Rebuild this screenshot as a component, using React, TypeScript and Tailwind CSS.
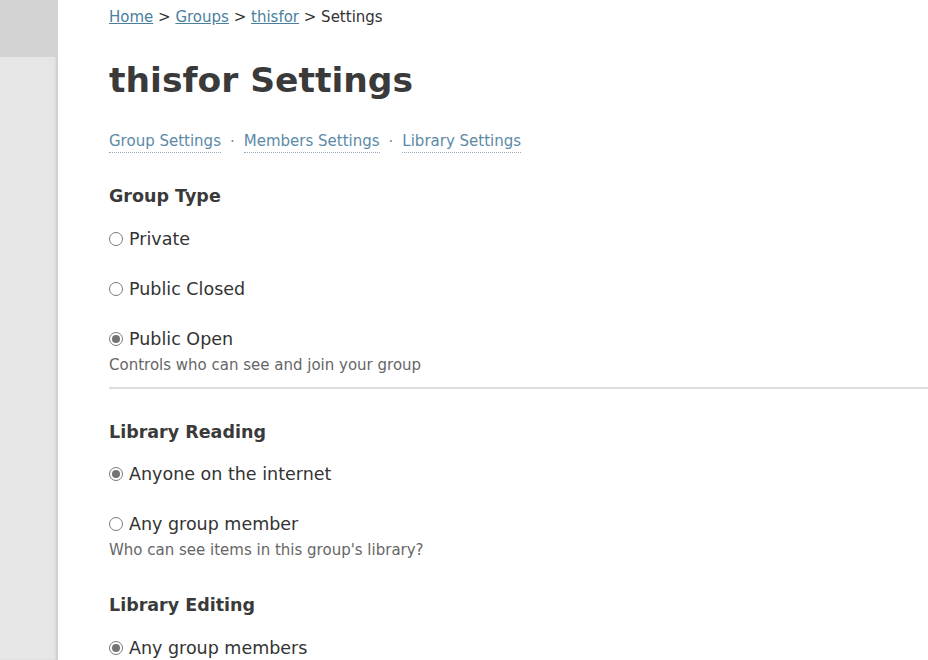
import React from "react";

function Radio({ checked, label }: { checked?: boolean; label: string }) {
  return (
    <label className="flex items-center gap-[6px] text-[17.5px] text-[#333] leading-[24px]">
      <span className="w-[14px] h-[14px] rounded-full border border-[#7a7a7a] bg-white flex items-center justify-center shrink-0">
        {checked && <span className="w-[8px] h-[8px] rounded-full bg-[#737373]" />}
      </span>
      <span>{label}</span>
    </label>
  );
}

export default function App() {
  return (
    <div className="flex min-h-[660px] bg-white" style={{ fontFamily: '"DejaVu Sans", Verdana, sans-serif' }}>
      <div className="w-[58px] shrink-0 flex flex-col bg-[#e6e6e6] shadow-[inset_-3px_0_3px_-1px_rgba(0,0,0,0.12)]">
        <div className="h-[57px] bg-[#d3d3d3]" />
      </div>
      <div className="flex-1 pl-[51px] overflow-hidden">
        <div className="pt-[6px] text-[15px] leading-[22px] text-[#333]">
          <a className="text-[#4a7f9f] underline">Home</a> &gt; <a className="text-[#4a7f9f] underline">Groups</a> &gt;{" "}
          <a className="text-[#4a7f9f] underline">thisfor</a> &gt; Settings
        </div>
        <h1 className="mt-[32px] text-[34.5px] leading-[40px] font-bold text-[#3a3a3a]">thisfor Settings</h1>
        <div className="mt-[30px] flex items-center text-[15px] leading-[22px] text-[#5b8aa7]">
          <a className="border-b border-dotted border-[#9ab]">Group Settings</a>
          <span className="mx-[9px] text-[#888]">·</span>
          <a className="border-b border-dotted border-[#9ab]">Members Settings</a>
          <span className="mx-[9px] text-[#888]">·</span>
          <a className="border-b border-dotted border-[#9ab]">Library Settings</a>
        </div>
        <h2 className="mt-[31px] text-[17.5px] leading-[24px] font-bold text-[#3a3a3a]">Group Type</h2>
        <div className="mt-[19px] flex flex-col gap-[26px]">
          <Radio label="Private" />
          <Radio label="Public Closed" />
          <Radio checked label="Public Open" />
        </div>
        <p className="mt-[4px] text-[15px] leading-[20px] text-[#666]">Controls who can see and join your group</p>
        <div className="mt-[12px] border-t-2 border-[#dcdcdc] -mr-[10px]" />
        <h2 className="mt-[31px] text-[17.5px] leading-[24px] font-bold text-[#3a3a3a]">Library Reading</h2>
        <div className="mt-[18px] flex flex-col gap-[26px]">
          <Radio checked label="Anyone on the internet" />
          <Radio label="Any group member" />
        </div>
        <p className="mt-[4px] text-[15px] leading-[20px] text-[#666]">Who can see items in this group's library?</p>
        <h2 className="mt-[33px] text-[17.5px] leading-[24px] font-bold text-[#3a3a3a]">Library Editing</h2>
        <div className="mt-[19px] flex flex-col gap-[26px]">
          <Radio checked label="Any group members" />
        </div>
      </div>
    </div>
  );
}
